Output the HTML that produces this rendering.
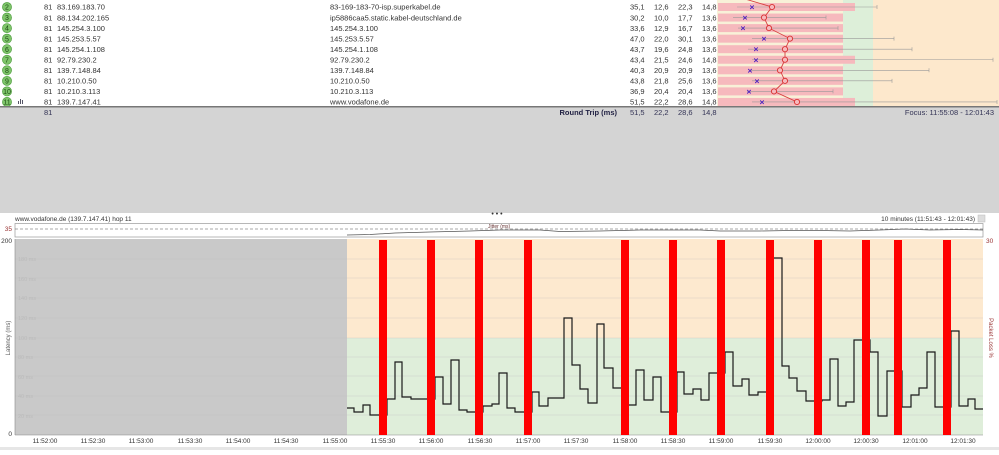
<!DOCTYPE html>
<html><head><meta charset="utf-8">
<style>
body{margin:0;width:999px;height:450px;overflow:hidden;background:#fff;font-family:"Liberation Sans",sans-serif;}
svg text{font-family:"Liberation Sans",sans-serif;}
</style></head><body>
<svg width="999" height="450" viewBox="0 0 999 450" xmlns="http://www.w3.org/2000/svg">
<rect x="717" y="0" width="126" height="107" fill="#f8f1d8"/>
<rect x="843" y="0" width="30" height="107" fill="#ddefd9"/>
<rect x="873" y="0" width="126" height="107" fill="#fde8cc"/>
<g id="rows" font-size="7.5" fill="#333">
</g>
<rect x="0" y="107" width="999" height="106" fill="#d4d4d4"/>
<rect x="0" y="106" width="999" height="1.5" fill="#777"/>
<text x="44" y="115" font-size="7.5" fill="#335">81</text>
<text x="617" y="115" font-size="7.5" fill="#224" font-weight="bold" text-anchor="end">Round Trip (ms)</text>
<text x="630" y="115" font-size="7.5" fill="#335">51,5</text>
<text x="654" y="115" font-size="7.5" fill="#335">22,2</text>
<text x="678" y="115" font-size="7.5" fill="#335">28,6</text>
<text x="702" y="115" font-size="7.5" fill="#335">14,8</text>
<text x="994" y="115" font-size="7.5" fill="#335" text-anchor="end">Focus: 11:55:08 - 12:01:43</text>
<rect x="0" y="213" width="999" height="237" fill="#fff"/>
<text x="497" y="216" font-size="7" fill="#333" text-anchor="middle">• • •</text>
<text x="15" y="221" font-size="6.5" fill="#333">www.vodafone.de (139.7.147.41) hop 11</text>
<text x="975" y="221" font-size="6.5" fill="#333" text-anchor="end">10 minutes (11:51:43 - 12:01:43)</text>
<rect x="978" y="215" width="7" height="7" fill="#ddd" stroke="#bbb" stroke-width="0.5"/>
<rect x="15" y="223.5" width="968" height="13.5" fill="#fff" stroke="#999" stroke-width="0.7"/>
<line x1="15" y1="229" x2="983" y2="229" stroke="#555" stroke-width="0.6" stroke-dasharray="3,2"/>
<text x="12" y="231" font-size="6.5" fill="#933" text-anchor="end">35</text>
<text x="488" y="228" font-size="5" fill="#633">Jitter (ms)</text>
<polyline fill="none" stroke="#555" stroke-width="0.7" points="347,235 370,234.5 395,233 430,232 470,231 500,230 540,230 560,231.5 600,231 640,230 700,230 720,231 760,231 790,230.5 820,230.5 850,231 880,230 905,229 930,230 960,229.5 983,230"/>
<rect x="15" y="239" width="332" height="196" fill="#c9c9c9"/>
<rect x="347" y="239" width="636" height="99" fill="#fde9cf"/>
<rect x="347" y="338" width="636" height="97" fill="#dfeeda"/>
<g stroke="#bdbdbd" stroke-width="0.5" opacity="0.6">
<line x1="15" x2="983" y1="259" y2="259"/><line x1="15" x2="983" y1="278" y2="278"/><line x1="15" x2="983" y1="298" y2="298"/><line x1="15" x2="983" y1="318" y2="318"/><line x1="15" x2="983" y1="338" y2="338"/><line x1="15" x2="983" y1="357" y2="357"/><line x1="15" x2="983" y1="376" y2="376"/><line x1="15" x2="983" y1="396" y2="396"/><line x1="15" x2="983" y1="415" y2="415"/>
</g>
<g font-size="5.5" fill="#bbb">
<text x="18" y="261">180 ms</text><text x="18" y="281">160 ms</text><text x="18" y="300">140 ms</text><text x="18" y="320">120 ms</text><text x="18" y="340">100 ms</text><text x="18" y="359">80 ms</text><text x="18" y="379">60 ms</text><text x="18" y="398">40 ms</text><text x="18" y="418">20 ms</text>
</g>
<line x1="15" y1="239" x2="15" y2="435" stroke="#888" stroke-width="0.6"/>
<line x1="15" y1="435" x2="983" y2="435" stroke="#888" stroke-width="0.6"/>
<text x="12" y="243" font-size="6.5" fill="#333" text-anchor="end">200</text>
<text x="12" y="436" font-size="6.5" fill="#333" text-anchor="end">0</text>
<text x="10" y="338" font-size="6" fill="#555" text-anchor="middle" transform="rotate(-90 10 338)">Latency (ms)</text>
<text x="986" y="243" font-size="6.5" fill="#933">30</text>
<text x="989" y="338" font-size="6" fill="#933" text-anchor="middle" transform="rotate(90 989 338)">Packet Loss %</text>
<polyline fill="none" stroke="#1a1a1a" stroke-width="1.2" points="347,408 354,408 354,412 363,412 363,405 370,405 370,415 387,415 387,399 395,399 395,362 402,362 402,397 411,397 411,399 435,399 435,377 443,377 443,404 451,404 451,360 459,360 459,410 467,410 467,412 483,412 483,406 492,406 492,404 499,404 499,373 507,373 507,408 515,408 515,412 532,412 532,392 539,392 539,406 548,406 548,398 564,398 564,318 572,318 572,365 580,365 580,389 588,389 588,403 597,403 597,324 604,324 604,368 613,368 613,388 628,388 628,405 636,405 636,370 644,370 644,400 653,400 653,377 661,377 661,412 677,412 677,372 684,372 684,394 693,394 693,389 701,389 701,400 709,400 709,373 725,373 725,352 733,352 733,386 742,386 742,379 749,379 749,395 758,395 758,392 773,392 773,258 782,258 782,366 789,366 789,378 797,378 797,391 806,391 806,401 822,401 822,400 830,400 830,359 838,359 838,406 846,406 846,402 854,402 854,340 870,340 870,352 878,352 878,416 887,416 887,371 902,371 902,407 911,407 911,395 919,395 919,388 927,388 927,352 935,352 935,407 951,407 951,331 959,331 959,406 968,406 968,399 975,399 975,409 983,409"/>
<g fill="#ff0000">
<rect x="379" y="240" width="8" height="195"/><rect x="427" y="240" width="8" height="195"/><rect x="475" y="240" width="8" height="195"/><rect x="524" y="240" width="8" height="195"/><rect x="621" y="240" width="8" height="195"/><rect x="669" y="240" width="8" height="195"/><rect x="717" y="240" width="8" height="195"/><rect x="766" y="240" width="8" height="195"/><rect x="814" y="240" width="8" height="195"/><rect x="862" y="240" width="8" height="195"/><rect x="894" y="240" width="8" height="195"/><rect x="943" y="240" width="8" height="195"/>
</g>
<g font-size="6.5" fill="#333" text-anchor="middle">
<text x="45" y="443">11:52:00</text><text x="93" y="443">11:52:30</text><text x="141" y="443">11:53:00</text><text x="190" y="443">11:53:30</text><text x="238" y="443">11:54:00</text><text x="286" y="443">11:54:30</text><text x="335" y="443">11:55:00</text><text x="383" y="443">11:55:30</text><text x="431" y="443">11:56:00</text><text x="480" y="443">11:56:30</text><text x="528" y="443">11:57:00</text><text x="576" y="443">11:57:30</text><text x="625" y="443">11:58:00</text><text x="673" y="443">11:58:30</text><text x="721" y="443">11:59:00</text><text x="770" y="443">11:59:30</text><text x="818" y="443">12:00:00</text><text x="866" y="443">12:00:30</text><text x="915" y="443">12:01:00</text><text x="963" y="443">12:01:30</text>
</g>
<rect x="0" y="447" width="999" height="3" fill="#e6e6e6"/>
</svg>
<script>
var rows=[
[2,"83.169.183.70","83-169-183-70-isp.superkabel.de","35,1","12,6","22,3","14,8",772,752,737,877,855],
[3,"88.134.202.165","ip5886caa5.static.kabel-deutschland.de","30,2","10,0","17,7","13,6",764,745,733,826,843],
[4,"145.254.3.100","145.254.3.100","33,6","12,9","16,7","13,6",769,743,738,838,843],
[5,"145.253.5.57","145.253.5.57","47,0","22,0","30,1","13,6",790,764,752,894,843],
[6,"145.254.1.108","145.254.1.108","43,7","19,6","24,8","13,6",785,756,748,912,843],
[7,"92.79.230.2","92.79.230.2","43,4","21,5","24,6","14,8",785,756,752,993,855],
[8,"139.7.148.84","139.7.148.84","40,3","20,9","20,9","13,6",780,750,750,929,843],
[9,"10.210.0.50","10.210.0.50","43,8","21,8","25,6","13,6",785,757,752,892,843],
[10,"10.210.3.113","10.210.3.113","36,9","20,4","20,4","13,6",774,749,747,833,843],
[11,"139.7.147.41","www.vodafone.de","51,5","22,2","28,6","14,8",797,762,752,997,855]];
var g=document.getElementById('rows'),s='',pts='735,-4 ';
rows.forEach(function(r,i){var y=7+i*10.55;
s+='<rect x="718" y="'+(y-4)+'" width="'+(r[11]-718)+'" height="8" fill="#f6b9bd"/>';
s+='<line x1="'+r[9]+'" x2="'+r[10]+'" y1="'+y+'" y2="'+y+'" stroke="#999" stroke-width="0.6"/><line x1="'+r[10]+'" x2="'+r[10]+'" y1="'+(y-2)+'" y2="'+(y+2)+'" stroke="#999" stroke-width="0.6"/>';
s+='<circle cx="7" cy="'+y+'" r="4.6" fill="#7ec46a" stroke="#4a9a3a" stroke-width="0.6"/><text x="7" y="'+(y+2.6)+'" font-size="7" fill="#1d4d14" text-anchor="middle">'+r[0]+'</text>';
s+='<text x="44" y="'+(y+2.7)+'">81</text><text x="57" y="'+(y+2.7)+'">'+r[1]+'</text><text x="330" y="'+(y+2.7)+'">'+r[2]+'</text>';
s+='<text x="630" y="'+(y+2.7)+'">'+r[3]+'</text><text x="654" y="'+(y+2.7)+'">'+r[4]+'</text><text x="678" y="'+(y+2.7)+'">'+r[5]+'</text><text x="702" y="'+(y+2.7)+'">'+r[6]+'</text>';
s+='<text x="'+r[8]+'" y="'+(y+3)+'" font-size="8.5" font-weight="bold" fill="#4a1ec0" text-anchor="middle">×</text>';
pts+=r[7]+','+y+' ';});
s+='<polyline points="'+pts+'" fill="none" stroke="#d84040" stroke-width="0.9"/>';
rows.forEach(function(r,i){var y=7+i*10.55;s+='<circle cx="'+r[7]+'" cy="'+y+'" r="2.6" fill="#f6b9bd" stroke="#d83030" stroke-width="0.9"/>';});
s+='<g fill="#556"><rect x="18" y="101" width="1" height="3"/><rect x="20" y="99" width="1" height="5"/><rect x="22" y="100" width="1" height="4"/></g>';
g.innerHTML=s;
</script>
</body></html>
